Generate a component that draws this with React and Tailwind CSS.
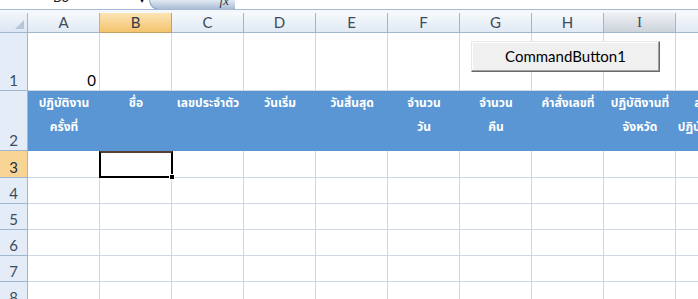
import React from 'react';

const cols = ['A', 'B', 'C', 'D', 'E', 'F', 'G', 'H', 'I', 'J'];

const titles = [
  ['ปฏิบัติงาน', 'ครั้งที่'],
  ['ชื่อ'],
  ['เลขประจำตัว'],
  ['วันเริ่ม'],
  ['วันสิ้นสุด'],
  ['จำนวน', 'วัน'],
  ['จำนวน', 'คืน'],
  ['คำสั่งเลขที่'],
  ['ปฏิบัติงานที่', 'จังหวัด'],
  ['สถานที่', 'ปฏิบัติราชการ'],
];

const calibri = { fontFamily: 'Lato, "Open Sans", sans-serif' };
const thai = { fontFamily: 'Tahoma, "Noto Sans Thai", "Noto Sans", "DejaVu Sans", sans-serif' };

const RowHead = ({ n, h, active }) => (
  <div
    className={`w-[28px] shrink-0 border-r border-b border-[#9eb6ce] flex items-end justify-center pb-[2px] text-[15px] leading-none ${h} ${
      active ? 'bg-[#f8d595] text-[#1f2d3d]' : 'bg-[#e4ecf7] text-[#3b4b5e]'
    }`}
    style={calibri}
  >
    {n}
  </div>
);

const Row = ({ n, h, children, active }) => (
  <div className="flex">
    <RowHead n={n} h={h} active={active} />
    {children}
  </div>
);

const Cell = ({ h, children }) => (
  <div className={`w-[72px] shrink-0 border-r border-b border-[#d0d7e5] ${h}`}>{children}</div>
);

export default function App() {
  return (
    <div className="w-[698px] h-[299px] overflow-hidden bg-white relative select-none">
      {/* formula bar strip, scrolled mostly out of view */}
      <div className="h-[10px] flex border-b border-[#a7bad3] overflow-hidden">
        <div className="w-[140px] pl-[53px]">
          <span className="text-[13px] text-[#222] leading-none block -mt-[9px]" style={calibri}>
            B3
          </span>
        </div>
        <div className="w-[9px] text-[8px] leading-none -mt-[4px] text-black">▾</div>
        <div className="w-[86px] h-[10px] rounded-bl-[14px] rounded-br-[3px] bg-gradient-to-b from-[#e2eaf4] to-[#a9bdd6] border-l border-b border-[#8ea4c1] flex justify-end pr-[6px]">
          <span className="text-[13px] italic leading-none -mt-[6px] text-[#333]" style={{ fontFamily: '"Liberation Serif", serif' }}>
            fx
          </span>
        </div>
      </div>
      <div className="h-[3px] bg-[#f4f7fb]" />

      {/* column headers */}
      <div className="flex h-[20px]">
        <div className="w-[28px] shrink-0 border-r border-b border-[#9eb6ce] bg-gradient-to-b from-[#f1f5fa] to-[#dce6f3] flex items-end justify-end p-[3px]">
          <svg width="9" height="9" viewBox="0 0 9 9">
            <polygon points="9,0 9,9 0,9" fill="#b6c7dc" />
          </svg>
        </div>
        {cols.map((c) => (
          <div
            key={c}
            className={`w-[72px] shrink-0 border-r border-b flex items-center justify-center text-[15px] leading-none ${
              c === 'B'
                ? 'bg-gradient-to-b from-[#fbe4b4] to-[#f3c46c] border-[#c2a066] text-[#2d3a4a]'
                : c === 'I'
                ? 'bg-gradient-to-b from-[#eef0f3] to-[#cdd3db] border-[#9eb6ce] text-[#3b4b5e]'
                : 'bg-gradient-to-b from-[#f6f9fc] to-[#e0e9f4] border-[#9eb6ce] text-[#3b4b5e]'
            }`}
            style={c === 'I' ? { fontFamily: '"Liberation Serif", serif' } : calibri}
          >
            {c}
          </div>
        ))}
      </div>

      {/* row 1 */}
      <Row n={1} h="h-[58px]">
        {cols.map((c) => (
          <Cell key={c} h="h-[58px]">
            {c === 'A' && (
              <div className="h-full flex items-end justify-end pr-[3px] pb-[2px] text-[15px] leading-none text-black" style={calibri}>
                0
              </div>
            )}
          </Cell>
        ))}
      </Row>

      {/* row 2 - blue titles */}
      <Row n={2} h="h-[60px]">
        {titles.map((t, i) => (
          <div key={i} className="w-[72px] shrink-0 h-[60px] bg-[#5a96d3] flex flex-col items-center text-white font-bold text-[12px] leading-[24px] whitespace-nowrap" style={thai}>
            {t.map((line, j) => (
              <span key={j}>{line}</span>
            ))}
          </div>
        ))}
      </Row>

      {/* row 3 with selection */}
      <Row n={3} h="h-[27px]" active>
        {cols.map((c) => (
          <div key={c} className="w-[72px] shrink-0 h-[27px] border-r border-b border-[#d0d7e5] relative">
            {c === 'B' && (
              <div className="absolute -left-px top-0 w-[74px] h-[27px] border-2 border-black border-t-[#5b4030] z-10">
                <div className="absolute -right-[4px] -bottom-[4px] w-[6px] h-[6px] bg-black border border-white" />
              </div>
            )}
          </div>
        ))}
      </Row>

      {[4, 5, 6, 7, 8].map((n) => (
        <Row key={n} n={n} h="h-[26px]">
          {cols.map((c) => (
            <Cell key={c} h="h-[26px]" />
          ))}
        </Row>
      ))}

      {/* ActiveX button floating over the sheet */}
      <button
        className="absolute left-[471px] top-[41px] w-[189px] h-[31px] bg-[#f0f0f0] border border-t-[#e8e8e8] border-l-[#e8e8e8] border-r-[#696969] border-b-[#696969] shadow-[inset_-1px_-1px_0_#a0a0a0,inset_1px_1px_0_#ffffff] text-[15px] text-black flex items-center justify-center"
        style={calibri}
      >
        CommandButton1
      </button>
    </div>
  );
}
